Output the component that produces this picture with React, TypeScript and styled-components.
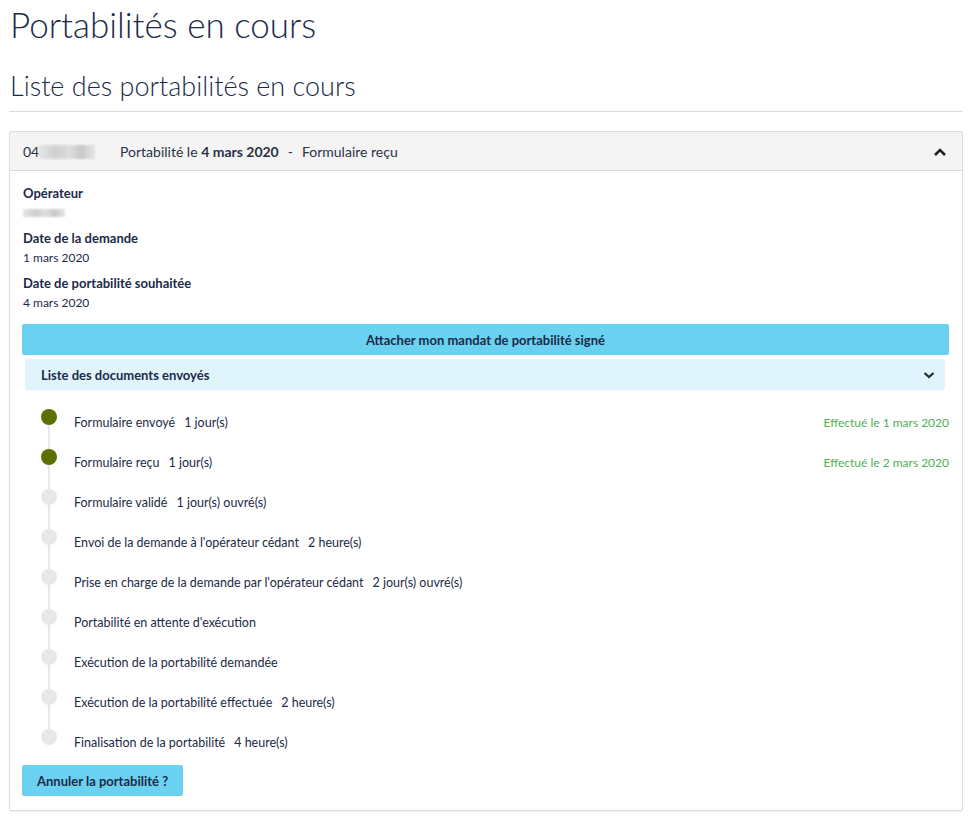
import React from "react";
import styled, { createGlobalStyle } from "styled-components";

const Global = createGlobalStyle`
  html, body { margin: 0; padding: 0; background: #fff; }
  body { font-family: "Lato", "Open Sans", sans-serif; color: #1b2a48; }
  * { box-sizing: border-box; }
`;

const Page = styled.div`
  padding: 0 8px 8px 9px;
`;

const Title = styled.h1`
  margin: 0;
  padding: 2px 0 0 1px;
  font-size: 35px;
  font-weight: 300;
  line-height: 44px;
  color: #1b2a48;
`;

const SubTitle = styled.h2`
  margin: 21px 0 0;
  padding: 0 0 6px 1px;
  font-size: 27px;
  font-weight: 300;
  line-height: 38px;
  color: #1b2a48;
  border-bottom: 1px solid #dcdcdc;
`;

const Card = styled.div`
  margin-top: 19px;
  border: 1px solid #dcdcdc;
  border-radius: 2px;
  box-shadow: 0 1px 1px rgba(0, 0, 0, 0.06);
`;

const CardHeader = styled.div`
  display: flex;
  align-items: center;
  height: 39px;
  padding: 1px 15px 0 13px;
  background: #f4f4f4;
  border-bottom: 1px solid #dcdcdc;
  font-size: 14px;
  color: #2a3346;
`;

const Number = styled.span`
  display: flex;
  align-items: center;
  width: 97px;
`;

const Blur = styled.span<{ $w: number; $h: number }>`
  display: inline-block;
  width: ${(p) => p.$w}px;
  height: ${(p) => p.$h}px;
  background: linear-gradient(90deg, #e4e4e4 0%, #cfcfcf 30%, #dedede 55%, #c8c8c8 75%, #e6e6e6 100%);
  filter: blur(1.2px);
`;

const HeaderTitle = styled.span`
  flex: 1;
  b { font-weight: 700; }
`;

const Dash = styled.span`
  padding: 0 9px;
`;

const Chevron = styled.svg`
  display: block;
`;

const Body = styled.div`
  padding: 14px 13px 14px 12px;
`;

const Label = styled.div`
  font-size: 13px;
  font-weight: 700;
  line-height: 16px;
  padding-left: 1px;
  color: #1b2a48;
`;

const Value = styled.div`
  font-size: 12px;
  line-height: 16px;
  padding-left: 1px;
  margin: 4px 0 9px;
  color: #1b2a48;
  display: flex;
  align-items: center;
  min-height: 16px;
`;

const PrimaryButton = styled.button<{ $full?: boolean }>`
  display: block;
  width: ${(p) => (p.$full ? "100%" : "auto")};
  height: 31px;
  padding: 0 15px;
  border: none;
  border-radius: 2px;
  background: #6ad1f0;
  color: #1b2a48;
  font-family: inherit;
  font-size: 13px;
  font-weight: 700;
  cursor: pointer;
`;

const AttachButton = styled(PrimaryButton)`
  margin-top: 13px;
`;

const Accordion = styled.div`
  display: flex;
  align-items: center;
  justify-content: space-between;
  height: 31px;
  margin: 4px 4px 0 3px;
  padding: 0 10px 0 16px;
  background: #e0f4fb;
  border-radius: 2px;
  font-size: 13px;
  font-weight: 700;
  color: #1b2a48;
`;

const Timeline = styled.ul`
  list-style: none;
  margin: 19px 0 0;
  padding: 0;
`;

const Step = styled.li<{ $last?: boolean }>`
  position: relative;
  display: flex;
  align-items: flex-start;
  justify-content: space-between;
  height: ${(p) => (p.$last ? 34 : 40)}px;
  padding: 6px 0 0 52px;
  font-size: 12.5px;
  line-height: 16px;
  color: #1b2a48;
  &::before {
    content: "";
    display: ${(p) => (p.$last ? "none" : "block")};
    position: absolute;
    left: 26px;
    top: 8px;
    width: 2px;
    height: 40px;
    background: #e8e8e8;
  }
`;

const Dot = styled.span<{ $done?: boolean }>`
  position: absolute;
  left: 19px;
  top: 0;
  width: 16px;
  height: 16px;
  border-radius: 50%;
  background: ${(p) => (p.$done ? "#5a7100" : "#e8e8e8")};
`;

const Duration = styled.span`
  margin-left: 9px;
`;

const Done = styled.span`
  font-size: 12px;
  color: #4caf50;
`;

const Footer = styled.div`
  margin-top: 2px;
`;

const steps: { label: string; dur?: string; done?: string }[] = [
  { label: "Formulaire envoyé", dur: "1 jour(s)", done: "Effectué le 1 mars 2020" },
  { label: "Formulaire reçu", dur: "1 jour(s)", done: "Effectué le 2 mars 2020" },
  { label: "Formulaire validé", dur: "1 jour(s) ouvré(s)" },
  { label: "Envoi de la demande à l'opérateur cédant", dur: "2 heure(s)" },
  { label: "Prise en charge de la demande par l'opérateur cédant", dur: "2 jour(s) ouvré(s)" },
  { label: "Portabilité en attente d'exécution" },
  { label: "Exécution de la portabilité demandée" },
  { label: "Exécution de la portabilité effectuée", dur: "2 heure(s)" },
  { label: "Finalisation de la portabilité", dur: "4 heure(s)" },
];

export default function App() {
  return (
    <>
      <Global />
      <Page>
        <Title>Portabilités en cours</Title>
        <SubTitle>Liste des portabilités en cours</SubTitle>
        <Card>
          <CardHeader>
            <Number>
              04
              <Blur $w={56} $h={14} />
            </Number>
            <HeaderTitle>
              Portabilité le <b>4 mars 2020</b>
              <Dash>-</Dash>Formulaire reçu
            </HeaderTitle>
            <Chevron width="14" height="10" viewBox="0 0 14 10">
              <path d="M2 8 L7 3 L12 8" fill="none" stroke="#222" strokeWidth="2.6" />
            </Chevron>
          </CardHeader>
          <Body>
            <Label>Opérateur</Label>
            <Value>
              <Blur $w={42} $h={8} />
            </Value>
            <Label>Date de la demande</Label>
            <Value>1 mars 2020</Value>
            <Label>Date de portabilité souhaitée</Label>
            <Value>4 mars 2020</Value>
            <AttachButton $full>Attacher mon mandat de portabilité signé</AttachButton>
            <Accordion>
              Liste des documents envoyés
              <Chevron width="12" height="8" viewBox="0 0 12 8">
                <path d="M1.5 2 L6 6 L10.5 2" fill="none" stroke="#1b2a48" strokeWidth="2.2" />
              </Chevron>
            </Accordion>
            <Timeline>
              {steps.map((s, i) => (
                <Step key={i} $last={i === steps.length - 1}>
                  <Dot $done={!!s.done} />
                  <span>
                    {s.label}
                    {s.dur && <Duration>{s.dur}</Duration>}
                  </span>
                  {s.done && <Done>{s.done}</Done>}
                </Step>
              ))}
            </Timeline>
            <Footer>
              <PrimaryButton>Annuler la portabilité ?</PrimaryButton>
            </Footer>
          </Body>
        </Card>
      </Page>
    </>
  );
}
